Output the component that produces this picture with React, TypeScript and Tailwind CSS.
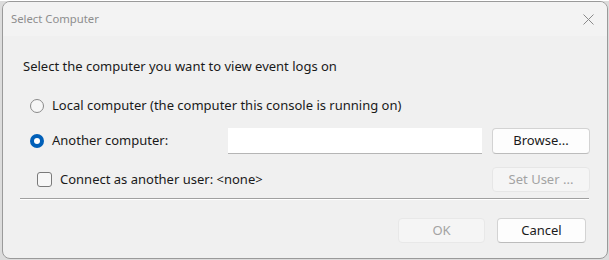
import React from "react";

const font = { fontFamily: '"Noto Sans", "Open Sans", sans-serif' };

export default function App() {
  return (
    <div className="w-[609px] h-[260px] bg-[#dcdcdc]" style={font}>
      <div className="ml-[2px] mt-[1px] w-[606px] h-[258px] border border-[#9a9a9a] rounded-[8px] bg-[#f0f0f0] overflow-hidden flex flex-col">
        {/* title bar */}
        <div className="h-[34px] bg-[#f3f3f3] flex items-center pl-[8px] pr-[13px] shrink-0">
          <span className="text-[11.3px] text-[#8e8e8e] leading-none">Select Computer</span>
          <svg className="ml-auto" width="11" height="11" viewBox="0 0 11 11">
            <path d="M0.5 0.5 L10.5 10.5 M10.5 0.5 L0.5 10.5" stroke="#8a8a8a" strokeWidth="1" fill="none" />
          </svg>
        </div>
        {/* body */}
        <div className="flex flex-col text-[13px] text-[#1a1a1a] pr-[17px]">
          <div className="mt-[21px] h-[20px] flex items-center pl-[20px]">
            Select the computer you want to view event logs on
          </div>
          <div className="mt-[17px] h-[24px] flex items-center pl-[27px] gap-[8px]">
            <span className="w-[14px] h-[14px] rounded-full border border-[#8a8a8a] bg-[#f7f7f7] shrink-0" />
            <span>Local computer (the computer this console is running on)</span>
          </div>
          <div className="mt-[10px] h-[26px] flex items-center pl-[27px]">
            <span className="w-[14px] h-[14px] rounded-full bg-[#005fb8] flex items-center justify-center shrink-0">
              <span className="w-[6px] h-[6px] rounded-full bg-white" />
            </span>
            <span className="ml-[8px] w-[176px]">Another computer:</span>
            <div className="w-[254px] h-[26px] bg-white border-b border-[#b5b5b5]" />
            <button className="ml-[10px] w-[98px] h-[26px] bg-[#fdfdfd] border border-[#d3d3d3] border-b-[#bcbcbc] rounded-[4px] text-[#1a1a1a] text-[13px]">
              Browse...
            </button>
          </div>
          <div className="mt-[13px] h-[25px] flex items-center pl-[34px]">
            <span className="w-[15px] h-[15px] rounded-[3px] border border-[#7a7a7a] bg-[#f7f7f7] shrink-0" />
            <span className="ml-[8px]">Connect as another user: &lt;none&gt;</span>
            <button className="ml-auto w-[98px] h-[25px] bg-[#f5f5f5] border border-[#e6e6e6] rounded-[4px] text-[#a3a3a3] text-[13px]">
              Set User ...
            </button>
          </div>
          <div className="mt-[6px] ml-[17px] mr-[1px] h-[2px] border-t border-[#a0a0a0] border-b border-b-white" />
          <div className="mt-[18px] flex justify-end gap-[12px] pr-[4px]">
            <button className="w-[87px] h-[25px] bg-[#f5f5f5] border border-[#e8e8e8] rounded-[4px] text-[#a3a3a3] text-[13px]">
              OK
            </button>
            <button className="w-[89px] h-[25px] bg-[#fdfdfd] border border-[#d3d3d3] border-b-[#bcbcbc] rounded-[4px] text-[#1a1a1a] text-[13px]">
              Cancel
            </button>
          </div>
        </div>
      </div>
    </div>
  );
}
